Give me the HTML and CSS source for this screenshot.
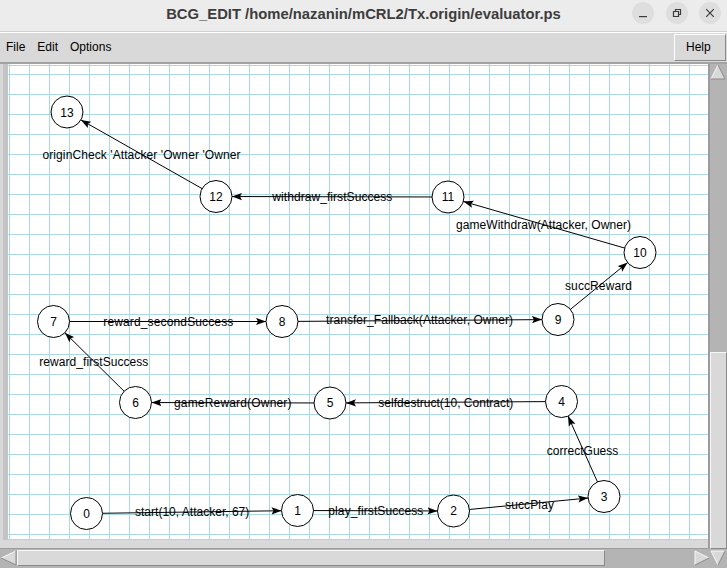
FILE: index.html
```html
<!DOCTYPE html>
<html lang="en">
  <head>
    <meta charset="UTF-8" />
    <title>BCG_EDIT</title>
    <link rel="stylesheet" href="styles.css">
  </head>
  <body>
    <header class="titlebar">
      <h1 class="title">BCG_EDIT /home/nazanin/mCRL2/Tx.origin/evaluator.ps</h1>
      <div class="win-buttons">
        <span class="win-btn">
          <svg width="22" height="22" viewBox="0 0 22 22"><path d="M7 14.6H15" /></svg>
        </span>
        <span class="win-btn">
          <svg width="22" height="22" viewBox="0 0 22 22"><path d="M7.5 9.5H12.5V14.5H7.5Z M9.5 9.5V7.5H14.5V12.5H12.5" /></svg>
        </span>
        <span class="win-btn">
          <svg width="22" height="22" viewBox="0 0 22 22"><path d="M7.2 7.2L14.8 14.8M14.8 7.2L7.2 14.8" /></svg>
        </span>
      </div>
    </header>

    <nav class="menubar">
      <span class="menu-item">File</span>
      <span class="menu-item">Edit</span>
      <span class="menu-item">Options</span>
      <span class="menu-help">Help</span>
    </nav>

    <main class="workspace">
      <div class="canvas-frame">
        <div class="canvas">
          <svg class="graph" width="700" height="476" viewBox="8 64 700 476">
            <defs>
              <pattern id="grid" x="9" y="74" width="20" height="20" patternUnits="userSpaceOnUse">
                <path d="M0.5 0V20M0 0.5H20" stroke="#acd9e4" fill="none" />
              </pattern>
              <marker id="arrow" markerUnits="userSpaceOnUse" markerWidth="30" markerHeight="8"
                      refX="26" refY="4" orient="auto">
                <path d="M10 4L0 0.4L2 4L0 7.6Z" fill="#000" />
              </marker>
            </defs>

            <rect x="8" y="64" width="700" height="476" fill="#fff" />
            <rect x="8" y="64" width="700" height="476" fill="url(#grid)" />
            <path d="M8 65.5H708M8 539.5H708" stroke="#acd9e4" />

            <!-- transitions -->
            <g class="edges">
              <line x1="86.5" y1="513.5" x2="297.5" y2="510.5" />
              <line x1="297.5" y1="510.5" x2="453.5" y2="511" />
              <line x1="453.5" y1="511" x2="604" y2="496.5" />
              <line x1="604" y1="496.5" x2="561.5" y2="401.5" />
              <line x1="561.5" y1="401.5" x2="330" y2="403" />
              <line x1="330" y1="403" x2="135.5" y2="402.5" />
              <line x1="135.5" y1="402.5" x2="53.5" y2="321.5" />
              <line x1="53.5" y1="321.5" x2="282" y2="321.5" />
              <line x1="282" y1="321.5" x2="558" y2="319.5" />
              <line x1="558" y1="319.5" x2="640" y2="252.5" />
              <line x1="640" y1="252.5" x2="448" y2="197" />
              <line x1="448" y1="197" x2="216" y2="196.5" />
              <line x1="216" y1="196.5" x2="67" y2="112" />
            </g>

            <!-- states -->
            <g class="states">
              <circle cx="86.5" cy="513.5" r="16" /><text x="86.5" y="518">0</text>
              <circle cx="297.5" cy="510.5" r="16" /><text x="297.5" y="515">1</text>
              <circle cx="453.5" cy="511" r="16" /><text x="453.5" y="515.4">2</text>
              <circle cx="604" cy="496.5" r="16" /><text x="604" y="501">3</text>
              <circle cx="561.5" cy="401.5" r="16" /><text x="561.5" y="406">4</text>
              <circle cx="330" cy="403" r="16" /><text x="330" y="407.4">5</text>
              <circle cx="135.5" cy="402.5" r="16" /><text x="135.5" y="407">6</text>
              <circle cx="53.5" cy="321.5" r="16" /><text x="53.5" y="326">7</text>
              <circle cx="282" cy="321.5" r="16" /><text x="282" y="326">8</text>
              <circle cx="558" cy="319.5" r="16" /><text x="558" y="324">9</text>
              <circle cx="640" cy="252.5" r="16" /><text x="640" y="257">10</text>
              <circle cx="448" cy="197" r="16" /><text x="448" y="201.4">11</text>
              <circle cx="216" cy="196.5" r="16" /><text x="216" y="201">12</text>
              <circle cx="67" cy="112" r="16" /><text x="67" y="116.5">13</text>
            </g>

            <!-- labels -->
            <g class="labels">
              <text x="42.5" y="159.3" textLength="198">originCheck 'Attacker 'Owner 'Owner</text>
              <text x="272.3" y="201.2" textLength="120">withdraw_firstSuccess</text>
              <text x="456" y="229.4" textLength="175">gameWithdraw(Attacker, Owner)</text>
              <text x="565" y="290" textLength="67">succReward</text>
              <text x="103.3" y="325.8" textLength="130">reward_secondSuccess</text>
              <text x="326" y="324.4" textLength="187">transfer_Fallback(Attacker, Owner)</text>
              <text x="39.3" y="366.3" textLength="109">reward_firstSuccess</text>
              <text x="174" y="407.3" textLength="117.5">gameReward(Owner)</text>
              <text x="378.3" y="406.6" textLength="135">selfdestruct(10, Contract)</text>
              <text x="546.7" y="454.5" textLength="71.6">correctGuess</text>
              <text x="135" y="516.2" textLength="114.3">start(10, Attacker, 67)</text>
              <text x="328.3" y="515" textLength="95">play_firstSuccess</text>
              <text x="505" y="509.3" textLength="49">succPlay</text>
            </g>
          </svg>
        </div>
      </div>

      <div class="vscroll">
        <svg class="scroll-arrow" width="17" height="16" viewBox="0 0 17 16">
          <path class="arrow-fill" d="M8 1L1 15H15Z" />
          <path class="arrow-light" d="M1 15L8 1" />
          <path class="arrow-dark" d="M8 1L15 15H1" />
        </svg>
        <div class="trough"></div>
        <div class="thumb vthumb"></div>
        <svg class="scroll-arrow" width="17" height="17" viewBox="0 0 17 17">
          <path class="arrow-fill" d="M1 2H15L8 16Z" />
          <path class="arrow-light" d="M8 16L1 2H15" />
          <path class="arrow-dark" d="M15 2L8 16" />
        </svg>
      </div>

      <div class="hscroll">
        <svg class="scroll-arrow" width="17" height="16" viewBox="0 0 17 16">
          <path class="arrow-fill" d="M1 8L16 1V15Z" />
          <path class="arrow-light" d="M1 8L16 1" />
          <path class="arrow-dark" d="M16 1V15L1 8" />
        </svg>
        <div class="thumb hthumb"></div>
        <div class="trough"></div>
        <svg class="scroll-arrow" width="16" height="16" viewBox="0 0 16 16">
          <path class="arrow-fill" d="M15 8L1 1V15Z" />
          <path class="arrow-light" d="M1 15V1L15 8" />
          <path class="arrow-dark" d="M15 8L1 15" />
        </svg>
      </div>
    </main>
  </body>
</html>
```

FILE: styles.css
```css
* {
  box-sizing: border-box;
}

body {
  margin: 0;
  width: 727px;
  height: 568px;
  overflow: hidden;
  font-family: "Liberation Sans", Arial, sans-serif;
  background-color: #d9d9d9;
}

/* window title */
.titlebar {
  height: 32px;
  background-color: #ececec;
  border-bottom: 1px solid #d0d0d0;
  display: grid;
  grid-template-columns: 1fr auto 1fr;
  align-items: start;
}

.title {
  grid-column: 2;
  margin: 6px 0 0;
  font-size: 14.8px;
  line-height: 17px;
  font-weight: bold;
  color: #3c3c3c;
  white-space: nowrap;
}

.win-buttons {
  grid-column: 3;
  justify-self: end;
  display: flex;
  gap: 11.5px;
  margin: 2px 6px 0 0;
}

.win-btn {
  width: 22px;
  height: 22px;
  border-radius: 50%;
  background-color: #dedede;
}

.win-btn svg {
  display: block;
  fill: none;
  stroke: #3a3a3a;
  stroke-width: 1.2;
}

/* menu bar */
.menubar {
  height: 32px;
  border-top: 1px solid #ffffff;
  border-bottom: 2px solid #a3a3a3;
  background-color: #d9d9d9;
  display: flex;
  font-size: 12px;
  color: #000;
}

.menu-item {
  padding: 0 6px;
  line-height: 29px;
}

.menu-help {
  margin: 1px 1px 0 auto;
  width: 52px;
  height: 27px;
  border: 1px solid;
  border-color: #ffffff #8a8a8a #8a8a8a #ffffff;
  padding-left: 11px;
  line-height: 25px;
}

/* canvas + scrollbars */
.workspace {
  display: grid;
  grid-template-columns: 710px 17px;
  grid-template-rows: 485px 19px;
}

.canvas-frame {
  grid-column: 1;
  grid-row: 1;
  padding: 0 0 8px 3px;
  border-right: 2px solid #9c9c9c;
  border-bottom: 1px solid #9c9c9c;
}

.canvas {
  height: 476px;
  border-left: 5px solid #c4c4c4;
}

.graph {
  display: block;
}

.graph text {
  font-family: "Liberation Sans", Arial, sans-serif;
  font-size: 12px;
  fill: #000;
}

.edges line {
  stroke: #000;
  stroke-width: 1;
  marker-end: url(#arrow);
}

.states circle {
  fill: #fff;
  stroke: #000;
  stroke-width: 1;
}

.states text {
  text-anchor: middle;
}

.vscroll {
  grid-column: 2;
  grid-row: 1 / 3;
  background-color: #b4b4b4;
  display: flex;
  flex-direction: column;
  padding-bottom: 2px;
}

.hscroll {
  grid-column: 1;
  grid-row: 2;
  background-color: #b4b4b4;
  display: flex;
  padding: 1px 0 2px;
}

.scroll-arrow {
  display: block;
  flex: none;
}

.trough {
  flex: 1;
}

.thumb {
  flex: none;
  background-color: #d9d9d9;
  border: 1px solid;
  border-color: #f7f7f7 #8a8a8a #8a8a8a #f7f7f7;
}

.vthumb {
  height: 197px;
}

.hthumb {
  width: 588px;
}

.arrow-fill {
  fill: #d9d9d9;
}

.arrow-light {
  fill: none;
  stroke: #f7f7f7;
}

.arrow-dark {
  fill: none;
  stroke: #8a8a8a;
}
```
